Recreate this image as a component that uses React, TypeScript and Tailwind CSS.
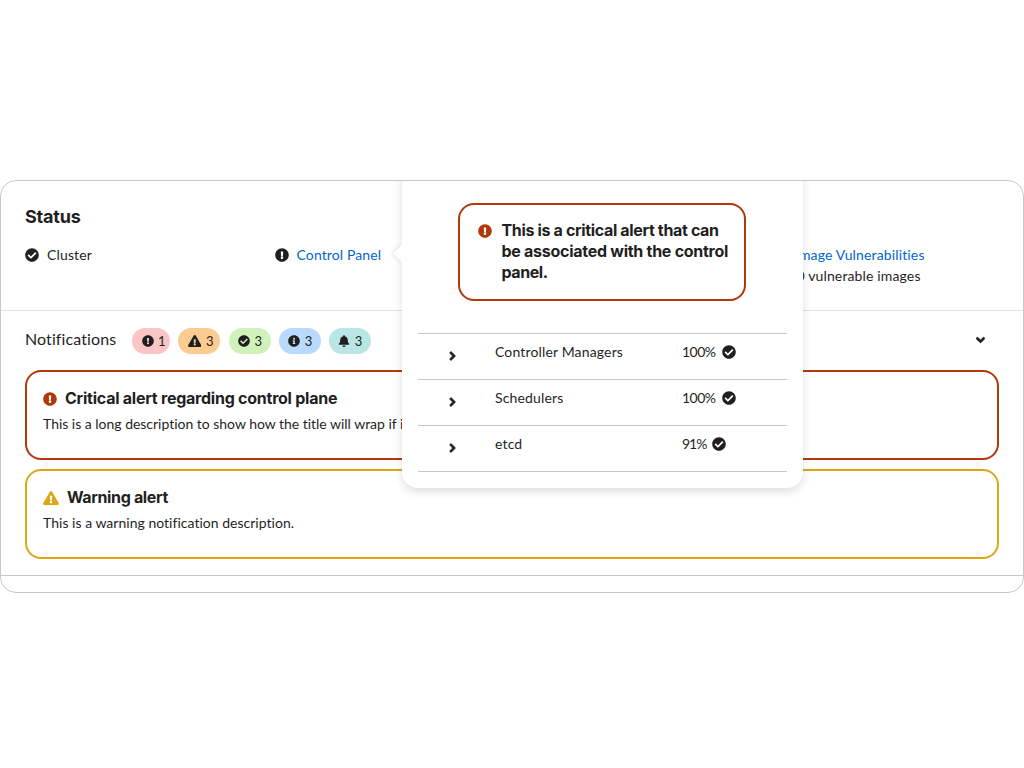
import type { ReactNode } from "react";
import {
  FaAngleDown,
  FaAngleRight,
  FaBell,
  FaCheckCircle,
  FaExclamationCircle,
  FaExclamationTriangle,
  FaInfoCircle,
} from "react-icons/fa";

function Pill({ className, icon, count }: { className: string; icon: ReactNode; count: number }) {
  return (
    <span className={`flex h-[26px] items-center rounded-full pl-[9.5px] text-[13px] leading-none ${className}`}>
      {icon}
      <span className="ml-[4.5px]">{count}</span>
    </span>
  );
}

function HealthRow({ name, value, short = false }: { name: string; value: string; short?: boolean }) {
  return (
    <div className="flex h-[46px] border-b border-[#c7c7c7] pl-[30px] pt-[8px] leading-[21px]">
      <FaAngleRight className="mt-[7px] h-[14px] w-[9px] stroke-[#1f1f1f] stroke-[20px]" />
      <span className="ml-[38px] mt-[-1px] w-[187px] tracking-[0.15px]">{name}</span>
      <span className={short ? "mt-[-1px] w-[23px] tracking-[-1px]" : "mt-[-1px] w-[33px] tracking-[-0.5px]"}>{value}</span>
      <FaCheckCircle className="ml-[7px] mt-[3px] size-[14px]" />
    </div>
  );
}

function ControlPanelPopover() {
  return (
    <div className="absolute left-[401px] top-[-20px] h-[327px] w-[401px] rounded-[16px] bg-white px-4 pt-[41.5px] shadow-[0_4px_9px_rgba(41,41,41,0.15)]">
      <div className="absolute left-[-6px] top-[86px] size-[13px] rotate-45 bg-white shadow-[-2px_2px_4px_rgba(41,41,41,0.08)]" />
      <div className="relative ml-[40px] flex h-[98px] w-[288px] rounded-[16px] border-2 border-[#b1380b] pl-[18px] pt-[15.5px]">
        <FaExclamationCircle className="mt-[4px] size-[14px] shrink-0 text-[#b1380b]" />
        <p className="ml-[9.5px] font-['Inter',sans-serif] text-[16px] font-bold leading-[21px]">
          <span className="block whitespace-nowrap tracking-[-0.35px]">This is a critical alert that can</span>
          <span className="block whitespace-nowrap tracking-[-0.27px]">be associated with the control</span>
          <span className="block tracking-[-0.42px]">panel.</span>
        </p>
      </div>
      <div className="mt-[32.5px] w-[369px] border-t border-[#c7c7c7]">
        <HealthRow name="Controller Managers" value="100%" />
        <HealthRow name="Schedulers" value="100%" />
        <HealthRow name="etcd" value="91%" short />
      </div>
    </div>
  );
}

export default function App() {
  return (
    <main className="h-[768px] w-[1024px] bg-white pt-[180px] font-['Lato',sans-serif] text-[14px] text-[#1f1f1f] [font-variant-ligatures:none]">
      <section className="relative h-[413px] overflow-hidden rounded-[16px] border border-[#c7c7c7]">
        <div className="h-[130px] border-b border-[#e0e0e0] px-6 pt-[24px]">
          <h2 className="font-['Inter',sans-serif] text-[18px] font-bold leading-[24px] tracking-[-0.2px]">Status</h2>
          <div className="mt-[15px] grid grid-cols-[249.5px_503px_1fr] leading-[21px]">
            <div className="flex">
              <FaCheckCircle className="mt-[4px] size-[14px]" />
              <span className="ml-[8px] tracking-[0.15px]">Cluster</span>
            </div>
            <div className="flex">
              <FaExclamationCircle className="mt-[4px] size-[14px]" />
              <a className="ml-[8px] tracking-[0.12px] text-[#0066cc]">Control Panel</a>
            </div>
            <div className="ml-[17.5px] tracking-[0.14px]">
              <a className="block text-[#0066cc]">Image Vulnerabilities</a>
              <span className="ml-[1.5px] block">0 vulnerable images</span>
            </div>
          </div>
        </div>

        <div className="h-[265px] border-b border-[#c7c7c7] px-6 pt-[17px]">
          <div className="flex h-[26px] items-center">
            <h3 className="mt-[-4px] w-[107px] text-[16px] leading-[24px] tracking-[0.1px]">Notifications</h3>
            <div className="flex gap-[8.1px]">
              <Pill className="w-[38.4px] bg-[#fbc5c5]" icon={<FaExclamationCircle className="size-[12px]" />} count={1} />
              <Pill className="w-[42px] bg-[#fccb8f]" icon={<FaExclamationTriangle className="h-[12px] w-[13.5px]" />} count={3} />
              <Pill className="w-[42px] bg-[#d1f1bb]" icon={<FaCheckCircle className="size-[12px]" />} count={3} />
              <Pill className="w-[42px] bg-[#b9dafc]" icon={<FaInfoCircle className="size-[12px]" />} count={3} />
              <Pill className="w-[42px] bg-[#b9e5e5]" icon={<FaBell className="h-[12px] w-[12px]" />} count={3} />
            </div>
            <FaAngleDown className="ml-auto mr-[14px] mt-[-2px] h-[14px] w-[9px] stroke-[#1f1f1f] stroke-[20px]" />
          </div>

          <article className="mt-[16px] h-[90px] rounded-[16px] border-2 border-[#b1380b] pl-[16px] pt-[16px]">
            <h4 className="flex font-['Inter',sans-serif] text-[16px] font-bold leading-[21px] tracking-[-0.24px]">
              <FaExclamationCircle className="mt-[4px] size-[14px] text-[#b1380b]" />
              <span className="ml-[8px]">Critical alert regarding control plane</span>
            </h4>
            <p className="mt-[4px] whitespace-nowrap leading-[21px] tracking-[-0.02px]">
              This is a long description to show how the title will wrap if it is long and wraps to multiple lines.
            </p>
          </article>

          <article className="mt-[9px] h-[90px] rounded-[16px] border-2 border-[#dca614] pl-[16px] pt-[16px]">
            <h4 className="flex font-['Inter',sans-serif] text-[16px] font-bold leading-[21px] tracking-[-0.36px]">
              <FaExclamationTriangle className="mt-[4px] h-[14px] w-[16px] text-[#dca614]" />
              <span className="ml-[8px]">Warning alert</span>
            </h4>
            <p className="mt-[4px] leading-[21px] tracking-[0.02px]">This is a warning notification description.</p>
          </article>
        </div>

        <ControlPanelPopover />
      </section>
    </main>
  );
}
